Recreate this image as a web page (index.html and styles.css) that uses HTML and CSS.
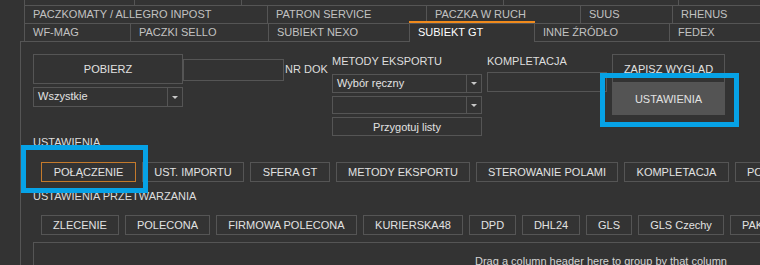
FILE: index.html
```html
<!DOCTYPE html>
<html lang="pl">
<head>
    <meta charset="UTF-8">
    <title>Eksport - Subiekt GT</title>
    <link rel="stylesheet" href="styles.css">
</head>
<body>
    <!-- Zakładki źródeł -->
    <div class="tabs">
        <div class="tab-row row-0">
            <div class="tab"></div>
            <div class="tab"></div>
            <div class="tab"></div>
            <div class="tab"></div>
            <div class="tab"></div>
        </div>
        <div class="tab-row row-1">
            <div class="tab">PACZKOMATY / ALLEGRO INPOST</div>
            <div class="tab">PATRON SERVICE</div>
            <div class="tab">PACZKA W RUCH</div>
            <div class="tab">SUUS</div>
            <div class="tab">RHENUS</div>
        </div>
        <div class="tab-row row-2">
            <div class="tab">WF-MAG</div>
            <div class="tab">PACZKI SELLO</div>
            <div class="tab">SUBIEKT NEXO</div>
            <div class="tab active">SUBIEKT GT</div>
            <div class="tab">INNE ŹRÓDŁO</div>
            <div class="tab">FEDEX</div>
        </div>
    </div>

    <div class="panel">
        <div class="top-form">
            <div class="col col-fetch">
                <button class="btn btn-fetch">POBIERZ</button>
                <div class="combo">
                    <span class="combo-text">Wszystkie</span>
                    <span class="combo-arrow"></span>
                </div>
            </div>
            <div class="doc-input"></div>
            <div class="doc-label">NR DOK</div>
            <div class="col col-export">
                <div class="field-label">METODY EKSPORTU</div>
                <div class="combo combo-first">
                    <span class="combo-text">Wybór ręczny</span>
                    <span class="combo-arrow"></span>
                </div>
                <div class="combo combo-second">
                    <span class="combo-text"></span>
                    <span class="combo-arrow"></span>
                </div>
                <button class="btn btn-prepare">Przygotuj listy</button>
            </div>
            <div class="col col-kompl">
                <div class="field-label">KOMPLETACJA</div>
                <div class="kompl-input"></div>
            </div>
            <div class="col col-layout">
                <button class="btn btn-save">ZAPISZ WYGLĄD</button>
                <button class="btn btn-settings">USTAWIENIA</button>
            </div>
        </div>

        <div class="section-label">USTAWIENIA</div>
        <div class="btn-row row-settings">
            <button class="btn btn-small active">POŁĄCZENIE</button>
            <button class="btn btn-small">UST. IMPORTU</button>
            <button class="btn btn-small">SFERA GT</button>
            <button class="btn btn-small">METODY EKSPORTU</button>
            <button class="btn btn-small">STEROWANIE POLAMI</button>
            <button class="btn btn-small">KOMPLETACJA</button>
            <button class="btn btn-small">POCZTA</button>
        </div>

        <div class="section-label section-second">USTAWIENIA PRZETWARZANIA</div>
        <div class="btn-row row-processing">
            <button class="btn btn-small">ZLECENIE</button>
            <button class="btn btn-small">POLECONA</button>
            <button class="btn btn-small">FIRMOWA POLECONA</button>
            <button class="btn btn-small">KURIERSKA48</button>
            <button class="btn btn-small">DPD</button>
            <button class="btn btn-small">DHL24</button>
            <button class="btn btn-small">GLS</button>
            <button class="btn btn-small">GLS Czechy</button>
            <button class="btn btn-small">PAKA</button>
        </div>

        <div class="grid">
            <div class="group-panel">Drag a column header here to group by that column</div>
        </div>
    </div>

    <!-- Zaznaczenia -->
    <div class="highlight hl-settings"></div>
    <div class="highlight hl-conn"></div>
</body>
</html>
```

FILE: styles.css
```css
/* Baza */
body {
    margin: 0;
    width: 760px;
    height: 265px;
    overflow: hidden;
    position: relative;
    background: #333333;
    color: #dedede;
    font-family: 'Liberation Sans', Arial, sans-serif;
    font-size: 11px;
}

/* Zakładki */
.tab-row {
    display: flex;
    margin-left: 24px;
    border-bottom: 1px solid #555;
}

.row-0 {
    height: 5px;
}

.row-1,
.row-2 {
    height: 17px;
}

.row-2 {
    border-bottom: none;
}

.tab {
    box-sizing: border-box;
    flex: none;
    border-left: 1px solid #555;
    padding-left: 8px;
    line-height: 17px;
    color: #c2c2c2;
    white-space: nowrap;
    overflow: hidden;
}

.tab:last-child {
    flex: 1;
}

.row-0 .tab:nth-child(1) { width: 110px; }
.row-0 .tab:nth-child(2) { width: 107px; }
.row-0 .tab:nth-child(3) { width: 262px; }
.row-0 .tab:nth-child(4) { width: 175px; }

.row-1 .tab:nth-child(1) { width: 243px; }
.row-1 .tab:nth-child(2) { width: 159px; }
.row-1 .tab:nth-child(3) { width: 154px; }
.row-1 .tab:nth-child(4) { width: 92px; }

.row-2 .tab:nth-child(1) { width: 106px; }
.row-2 .tab:nth-child(2) { width: 138px; }
.row-2 .tab:nth-child(3) { width: 141px; }
.row-2 .tab:nth-child(4) { width: 125px; }
.row-2 .tab:nth-child(5) { width: 135px; }

.tab.active {
    position: relative;
    overflow: visible;
    color: #ffffff;
}

.tab.active::before {
    content: "";
    position: absolute;
    top: -3px;
    left: -1px;
    right: -1px;
    height: 2px;
    background: #f08a1c;
}

.tab.active::after {
    content: "";
    position: absolute;
    bottom: -1px;
    left: 0;
    right: 0;
    height: 1px;
    background: #333333;
}

/* Panel główny */
.panel {
    margin-left: 20px;
    border: 1px solid #555;
    border-right: none;
    border-bottom: none;
    padding: 12px 0 0 12px;
}

.top-form {
    display: flex;
    align-items: flex-start;
}

.col {
    display: flex;
    flex-direction: column;
    flex: none;
}

.btn {
    box-sizing: border-box;
    margin: 0;
    padding: 0;
    border: 1px solid #555;
    background: #333333;
    color: #e2e2e2;
    font-family: inherit;
    font-size: 11px;
    text-align: center;
    white-space: nowrap;
}

.col-fetch {
    width: 150px;
}

.btn-fetch {
    height: 30px;
}

.combo {
    box-sizing: border-box;
    display: flex;
    height: 20px;
    margin-top: 3px;
    border: 1px solid #555;
}

.combo-text {
    flex: 1;
    padding-left: 4px;
    line-height: 17px;
    color: #e2e2e2;
}

.combo-arrow {
    width: 14px;
    border-left: 1px solid #555;
    display: flex;
    align-items: center;
    justify-content: center;
}

.combo-arrow::after {
    content: "";
    border-left: 3px solid transparent;
    border-right: 3px solid transparent;
    border-top: 3px solid #c8c8c8;
}

.doc-input {
    box-sizing: border-box;
    flex: none;
    width: 101px;
    height: 22px;
    margin-top: 5px;
    border: 1px solid #555;
}

.doc-label {
    flex: none;
    width: 47px;
    margin: 9px 0 0 1px;
    line-height: 13px;
}

.field-label {
    margin-top: 1px;
    line-height: 13px;
}

.col-export {
    width: 150px;
}

.combo-first {
    height: 19px;
    margin-top: 6px;
}

.combo-second {
    height: 18px;
}

.btn-prepare {
    height: 19px;
    margin-top: 3px;
}

.col-kompl {
    width: 120px;
    margin-left: 5px;
}

.kompl-input {
    box-sizing: border-box;
    height: 20px;
    margin-top: 4px;
    border: 1px solid #555;
}

.col-layout {
    width: 113px;
    margin-left: 5px;
}

.btn-save {
    height: 29px;
}

.btn-settings {
    height: 32px;
    background: #545454;
    border-color: #545454;
}

/* Sekcje ustawień */
.section-label {
    line-height: 13px;
    color: #dedede;
}

.section-second {
    margin-top: 8px;
}

.btn-row {
    display: flex;
    gap: 6px;
    margin: 13px 0 0 8px;
}

.row-processing {
    margin-top: 12px;
}

.btn-small {
    flex: none;
    height: 20px;
    padding: 0 2px;
    line-height: 18px;
}

.row-settings .btn-small:nth-child(1) { width: 95px; }
.row-settings .btn-small:nth-child(2) { width: 102px; }
.row-settings .btn-small:nth-child(3) { width: 80px; }
.row-settings .btn-small:nth-child(4) { width: 134px; }
.row-settings .btn-small:nth-child(5) { width: 142px; }
.row-settings .btn-small:nth-child(6) { width: 105px; }

.row-processing .btn-small:nth-child(1) { width: 78px; }
.row-processing .btn-small:nth-child(2) { width: 85px; }
.row-processing .btn-small:nth-child(3) { width: 141px; }
.row-processing .btn-small:nth-child(4) { width: 100px; }
.row-processing .btn-small:nth-child(5) { width: 47px; }
.row-processing .btn-small:nth-child(6) { width: 58px; }
.row-processing .btn-small:nth-child(7) { width: 46px; }
.row-processing .btn-small:nth-child(8) { width: 86px; }

/* przyciski ucięte przy prawej krawędzi */
.btn-row .btn-small:last-child {
    width: 90px;
    padding-left: 11px;
    text-align: left;
}

.btn-small.active {
    border-color: #c47a2c;
}

/* Siatka */
.grid {
    margin-top: 7px;
    height: 40px;
    border: 1px solid #555;
    border-right: none;
    padding: 12px 0 0 441px;
}

.group-panel {
    line-height: 13px;
    color: #d4d4d4;
    white-space: nowrap;
}

/* Niebieskie zaznaczenia */
.highlight {
    position: absolute;
    box-sizing: border-box;
    border: 5px solid #06a2e6;
}

.hl-settings {
    left: 600px;
    top: 73px;
    width: 139px;
    height: 54px;
}

.hl-conn {
    left: 21px;
    top: 145px;
    width: 127px;
    height: 48px;
}
```
